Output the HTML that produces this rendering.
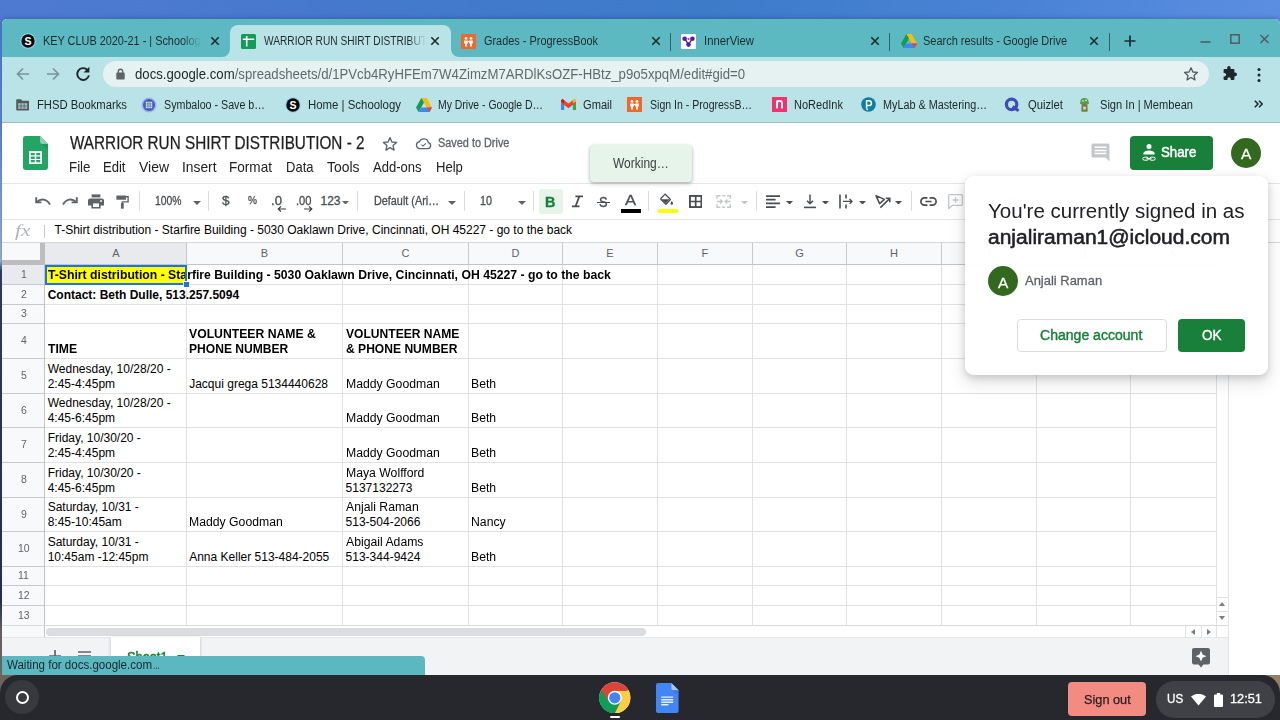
<!DOCTYPE html>
<html>
<head>
<meta charset="utf-8">
<title>WARRIOR RUN SHIRT DISTRIBUTION - 2 - Google Sheets</title>
<style>
*{box-sizing:border-box;margin:0;padding:0}
html,body{width:1280px;height:720px;overflow:hidden}
body{font-family:"Liberation Sans",sans-serif;position:relative;background:#4f7fd7;color:#202124}
.a{position:absolute;display:block}
.t{position:absolute;white-space:pre;transform-origin:left center;display:block}
</style>
</head>
<body>
<!-- chrome_ui -->
<div class="a" style="left:0px;top:0px;width:1280px;height:720px;background:linear-gradient(90deg,#4f7ad2 0%,#4679cd 25%,#3d7bc9 55%,#4a83d6 80%,#5b8ee1 100%);"></div>
<div class="a" style="left:0px;top:19px;width:3px;height:700px;background:linear-gradient(180deg,#4f7ad2 0%,#5a86d8 15%,#8fb0df 33%,#9ab4d8 34.5%,#2c3f60 36%,#22324e 83%,#6e675f 87.5%,#7a7168 100%);"></div>
<div class="a" style="left:2px;top:19px;width:1278px;height:656px;background:#fff;border-radius:5px 5px 0 0;box-shadow:0 -1px 4px rgba(20,30,80,.28)"></div>
<div class="a" style="left:2px;top:19px;width:1278px;height:38px;background:#5cb9c2;border-radius:5px 5px 0 0"></div>
<div class="a" style="left:230px;top:25px;width:221px;height:32px;background:#b9e3e7;border-radius:8px 8px 0 0"></div>
<svg class="a" style="left:222px;top:49px;" width="8" height="8" viewBox="0 0 8 8"><path d="M8 0V8H0A8 8 0 0 0 8 0Z" fill="#b9e3e7"/></svg>
<svg class="a" style="left:451px;top:49px;" width="8" height="8" viewBox="0 0 8 8"><path d="M0 0V8H8A8 8 0 0 1 0 0Z" fill="#b9e3e7"/></svg>
<svg class="a" style="left:20px;top:33px;" width="16" height="16" viewBox="0 0 16 16"><circle cx="8" cy="8" r="7.8" fill="#8fd4f2"/><circle cx="8" cy="8" r="6.7" fill="#0b0b0b"/><text x="8" y="11.7" font-family="Liberation Sans" font-weight="bold" font-size="10.5" fill="#fff" text-anchor="middle">S</text></svg>
<span class="t" style="left:43.0px;top:35.3px;font-size:12px;line-height:12px;color:#1f2a2c;transform:scaleX(0.9072);width:174.2px;overflow:hidden;-webkit-mask-image:linear-gradient(90deg,#000 154.3px,transparent 174.2px);">KEY CLUB 2020-21 - | Schoology</span>
<svg class="a" style="left:210px;top:36px;" width="10" height="10" viewBox="0 0 10 10"><path d="M1.2999999999999998 1.2999999999999998L8.7 8.7M8.7 1.2999999999999998L1.2999999999999998 8.7" stroke="#1f2a2c" stroke-width="1.6" fill="none"/></svg>
<svg class="a" style="left:241px;top:34px;" width="15" height="15" viewBox="0 0 15 15"><rect width="15" height="15" rx="1.5" fill="#0f9d58"/><path d="M1.8 5.2H13.2M5.7 2V12.6" stroke="#fff" stroke-width="1.6" fill="none"/></svg>
<span class="t" style="left:264.0px;top:35.3px;font-size:12px;line-height:12px;color:#1f2a2c;transform:scaleX(0.8466);width:191.4px;overflow:hidden;-webkit-mask-image:linear-gradient(90deg,#000 170.1px,transparent 191.4px);">WARRIOR RUN SHIRT DISTRIBUTION</span>
<svg class="a" style="left:430px;top:36px;" width="10" height="10" viewBox="0 0 10 10"><path d="M1.2999999999999998 1.2999999999999998L8.7 8.7M8.7 1.2999999999999998L1.2999999999999998 8.7" stroke="#1f2a2c" stroke-width="1.6" fill="none"/></svg>
<svg class="a" style="left:461px;top:34px;" width="15" height="15" viewBox="0 0 15 15"><rect width="15" height="15" fill="#f2682a"/><circle cx="5" cy="4.4" r="1.4" fill="#fff"/><circle cx="10" cy="4.4" r="1.4" fill="#fff"/><path d="M3.2 6.4H6.8V9.5H6V12.5H4V9.5H3.2ZM8.2 6.4H11.8V9.5H11V12.5H9V9.5H8.2Z" fill="#fff"/><path d="M6.8 7.5H8.2" stroke="#fff" stroke-width="1"/></svg>
<span class="t" style="left:484.0px;top:35.3px;font-size:12px;line-height:12px;color:#1f2a2c;transform:scaleX(0.9092);">Grades - ProgressBook</span>
<svg class="a" style="left:651px;top:36px;" width="10" height="10" viewBox="0 0 10 10"><path d="M1.2999999999999998 1.2999999999999998L8.7 8.7M8.7 1.2999999999999998L1.2999999999999998 8.7" stroke="#1f2a2c" stroke-width="1.6" fill="none"/></svg>
<div class="a" style="left:670px;top:33px;width:1px;height:18px;background:#2f6269;"></div>
<svg class="a" style="left:681px;top:34px;" width="15" height="15" viewBox="0 0 15 15"><rect width="15" height="15" rx="1" fill="#fff"/><path d="M4 5.2L7.5 10.5L11 5.2" stroke="#4a148c" stroke-width="1.3" fill="none"/><circle cx="3.6" cy="4.8" r="2.3" fill="#5e1b9e"/><circle cx="11.4" cy="4.8" r="2.3" fill="#5e1b9e"/><circle cx="7.5" cy="10.6" r="2.3" fill="#5e1b9e"/><circle cx="7.5" cy="5" r="1.1" fill="#e91e8c"/></svg>
<span class="t" style="left:704.0px;top:35.3px;font-size:12px;line-height:12px;color:#1f2a2c;transform:scaleX(0.9406);">InnerView</span>
<svg class="a" style="left:870px;top:36px;" width="10" height="10" viewBox="0 0 10 10"><path d="M1.2999999999999998 1.2999999999999998L8.7 8.7M8.7 1.2999999999999998L1.2999999999999998 8.7" stroke="#1f2a2c" stroke-width="1.6" fill="none"/></svg>
<div class="a" style="left:889px;top:33px;width:1px;height:18px;background:#2f6269;"></div>
<svg class="a" style="left:901px;top:34px;" width="16" height="14" viewBox="0 0 16 14"><path d="M5.4 0H10.6L16 9.4H10.8Z" fill="#fbbc04"/><path d="M5.4 0L8 4.6L2.6 14L0 9.4Z" fill="#0f9d58"/><path d="M5.3 9.4H16L13.4 14H2.6Z" fill="#4285f4"/><path d="M10.8 9.4H16L13.4 14Z" fill="#ea4335"/></svg>
<span class="t" style="left:923.0px;top:35.3px;font-size:12px;line-height:12px;color:#1f2a2c;transform:scaleX(0.9148);">Search results - Google Drive</span>
<svg class="a" style="left:1089px;top:36px;" width="10" height="10" viewBox="0 0 10 10"><path d="M1.2999999999999998 1.2999999999999998L8.7 8.7M8.7 1.2999999999999998L1.2999999999999998 8.7" stroke="#1f2a2c" stroke-width="1.6" fill="none"/></svg>
<div class="a" style="left:1109px;top:33px;width:1px;height:18px;background:#2f6269;"></div>
<svg class="a" style="left:1124px;top:35px;" width="12" height="12" viewBox="0 0 12 12"><path d="M6 0.5V11.5M0.5 6H11.5" stroke="#1f2a2c" stroke-width="1.7"/></svg>
<svg class="a" style="left:1200px;top:31px;" width="72" height="16" viewBox="0 0 72 16"><path d="M0.5 11H10.5" stroke="#505d60" stroke-width="1.6"/><rect x="30.8" y="3.8" width="8.4" height="8.4" fill="none" stroke="#505d60" stroke-width="1.5"/><path d="M60.5 4L68.5 12M68.5 4L60.5 12" stroke="#505d60" stroke-width="1.5"/></svg>
<div class="a" style="left:2px;top:57px;width:1278px;height:65px;background:#b9e3e7;"></div>
<div class="a" style="left:2px;top:122px;width:1278px;height:1px;background:#a3b9bc;"></div>
<svg class="a" style="left:16px;top:67px;" width="14" height="14" viewBox="0 0 14 14"><path d="M13 7H2M7 1.5L1.5 7L7 12.5" stroke="#7b9498" stroke-width="1.7" fill="none"/></svg>
<svg class="a" style="left:46px;top:67px;" width="14" height="14" viewBox="0 0 14 14"><path d="M1 7H12M7 1.5L12.5 7L7 12.5" stroke="#7b9498" stroke-width="1.7" fill="none"/></svg>
<svg class="a" style="left:75px;top:66px;" width="16" height="16" viewBox="0 0 16 16"><path d="M12.4 3.9A5.9 5.9 0 1 0 13.9 9.4" stroke="#1d2628" stroke-width="1.9" fill="none"/><path d="M8.6 6.6H14.4V0.8Z" fill="#1d2628"/></svg>
<div class="a" style="left:103px;top:61px;width:1106px;height:26px;background:#e6f2f2;border-radius:13px"></div>
<svg class="a" style="left:115.5px;top:68px;" width="9" height="12" viewBox="0 0 9 12"><rect x="0.3" y="4.6" width="8.4" height="6.8" rx="0.9" fill="#5f6466"/><path d="M2.3 5V3.4A2.2 2.2 0 0 1 6.7 3.4V5" stroke="#5f6466" stroke-width="1.4" fill="none"/></svg>
<span class="t" style="left:135.0px;top:67.1px;font-size:14px;line-height:14px;color:#5f6a6c;transform:scaleX(0.9417);"><b style="font-weight:400;color:#1d2628">docs.google.com</b>/spreadsheets/d/1PVcb4RyHFEm7W4ZimzM7ARDlKsOZF-HBtz_p9o5xpqM/edit#gid=0</span>
<svg class="a" style="left:1183px;top:66px;" width="16" height="16" viewBox="0 0 16 16"><path d="M8 1.8L9.9 6L14.4 6.4L11 9.4L12 13.9L8 11.5L4 13.9L5 9.4L1.6 6.4L6.1 6Z" stroke="#505d60" stroke-width="1.3" fill="none" stroke-linejoin="round"/></svg>
<svg class="a" style="left:1221px;top:66px;" width="16" height="16" viewBox="0 0 16 16"><path d="M6.2 1.8A1.7 1.7 0 0 1 9.6 1.8V3H12.4A1 1 0 0 1 13.4 4V6.6H14.2A1.8 1.8 0 0 1 14.2 10.2H13.4V13A1 1 0 0 1 12.4 14H9.8V13A1.7 1.7 0 0 0 6.4 13V14H3.6A1 1 0 0 1 2.6 13V10.4H3.4A1.7 1.7 0 0 0 3.4 7H2.6V4A1 1 0 0 1 3.6 3H6.2Z" fill="#1d2628"/></svg>
<svg class="a" style="left:1256px;top:67px;" width="6" height="16" viewBox="0 0 6 16"><circle cx="3" cy="2.4" r="1.5" fill="#1d2628"/><circle cx="3" cy="8" r="1.5" fill="#1d2628"/><circle cx="3" cy="13.6" r="1.5" fill="#1d2628"/></svg>
<svg class="a" style="left:16px;top:99px;" width="13.4" height="12" viewBox="0 0 13.4 12"><path d="M1.2 0.2H5L6.4 1.8H12.2A1 1 0 0 1 13.2 2.8V10.6A1 1 0 0 1 12.2 11.6H1.2A1 1 0 0 1 0.2 10.6V1.2A1 1 0 0 1 1.2 0.2Z" fill="#56595b"/><path d="M2.2 4.4H11.2V9.6H2.2Z" fill="#b9e3e7"/><path d="M2.2 6.2H11.2M2.2 7.9H11.2M5 4.4V9.6M8.2 4.4V9.6" stroke="#56595b" stroke-width="0.8"/></svg>
<span class="t" style="left:37.0px;top:98.8px;font-size:12px;line-height:12px;color:#1d2628;transform:scaleX(0.9372);">FHSD Bookmarks</span>
<svg class="a" style="left:141px;top:97px;" width="16" height="16" viewBox="0 0 16 16"><circle cx="8" cy="8" r="7.6" fill="#9db4e6"/><circle cx="8" cy="8" r="6" fill="#3f5fb5"/><path d="M4.8 4.8H11.2V11.2H4.8Z" fill="#e8eefc"/><path d="M6.9 4.8V11.2M9.1 4.8V11.2M4.8 6.9H11.2M4.8 9.1H11.2" stroke="#3f5fb5" stroke-width="0.7"/></svg>
<span class="t" style="left:164.0px;top:98.8px;font-size:12px;line-height:12px;color:#1d2628;transform:scaleX(0.8907);">Symbaloo - Save b…</span>
<svg class="a" style="left:285px;top:97px;" width="16" height="16" viewBox="0 0 16 16"><circle cx="8" cy="8" r="7.8" fill="#8fd4f2"/><circle cx="8" cy="8" r="6.7" fill="#0b0b0b"/><text x="8" y="11.7" font-family="Liberation Sans" font-weight="bold" font-size="10.5" fill="#fff" text-anchor="middle">S</text></svg>
<span class="t" style="left:308.0px;top:98.8px;font-size:12px;line-height:12px;color:#1d2628;transform:scaleX(0.9505);">Home | Schoology</span>
<svg class="a" style="left:416px;top:98px;" width="16" height="14" viewBox="0 0 16 14"><path d="M5.4 0H10.6L16 9.4H10.8Z" fill="#fbbc04"/><path d="M5.4 0L8 4.6L2.6 14L0 9.4Z" fill="#0f9d58"/><path d="M5.3 9.4H16L13.4 14H2.6Z" fill="#4285f4"/><path d="M10.8 9.4H16L13.4 14Z" fill="#ea4335"/></svg>
<span class="t" style="left:438.0px;top:98.8px;font-size:12px;line-height:12px;color:#1d2628;transform:scaleX(0.8699);">My Drive - Google D…</span>
<svg class="a" style="left:561px;top:99px;" width="15" height="11" viewBox="0 0 15 11"><path d="M0 1.2V11H3.2V4.6Z" fill="#4285f4"/><path d="M15 1.2V11H11.8V4.6Z" fill="#34a853"/><path d="M0 1.2L1.6 0L7.5 4.6L13.4 0L15 1.2V3.6L7.5 9.2L0 3.6Z" fill="#ea4335"/><path d="M0 1.2L1.6 0L3.2 1.3V4.6L0 2.4Z" fill="#c5221f"/><path d="M15 1.2L13.4 0L11.8 1.3V4.6L15 2.4Z" fill="#fbbc04"/></svg>
<span class="t" style="left:583.0px;top:98.8px;font-size:12px;line-height:12px;color:#1d2628;transform:scaleX(0.9252);">Gmail</span>
<svg class="a" style="left:627px;top:97px;" width="15" height="15" viewBox="0 0 15 15"><rect width="15" height="15" fill="#f2682a"/><circle cx="5" cy="4.4" r="1.4" fill="#fff"/><circle cx="10" cy="4.4" r="1.4" fill="#fff"/><path d="M3.2 6.4H6.8V9.5H6V12.5H4V9.5H3.2ZM8.2 6.4H11.8V9.5H11V12.5H9V9.5H8.2Z" fill="#fff"/><path d="M6.8 7.5H8.2" stroke="#fff" stroke-width="1"/></svg>
<span class="t" style="left:650.0px;top:98.8px;font-size:12px;line-height:12px;color:#1d2628;transform:scaleX(0.8790);">Sign In - ProgressB…</span>
<svg class="a" style="left:772px;top:97px;" width="15" height="15" viewBox="0 0 15 15"><rect width="15" height="15" fill="#f0336e"/><path d="M5 11.5V6.4A2.5 2.5 0 0 1 10 6.4V11.5" stroke="#fff" stroke-width="1.9" fill="none"/><path d="M5 3.6V7" stroke="#fff" stroke-width="1.9"/></svg>
<span class="t" style="left:794.0px;top:98.8px;font-size:12px;line-height:12px;color:#1d2628;transform:scaleX(0.9180);">NoRedInk</span>
<svg class="a" style="left:861px;top:97px;" width="15" height="15" viewBox="0 0 15 15"><circle cx="7.5" cy="7.5" r="7.3" fill="#0d7fa5"/><path d="M5.6 11.6V3.8H8A2.4 2.4 0 0 1 8 8.6H5.8" stroke="#fff" stroke-width="1.5" fill="none"/><circle cx="6.2" cy="12.4" r="0.8" fill="#fff"/></svg>
<span class="t" style="left:883.0px;top:98.8px;font-size:12px;line-height:12px;color:#1d2628;transform:scaleX(0.9013);">MyLab &amp; Mastering…</span>
<svg class="a" style="left:1004px;top:97px;" width="17" height="16" viewBox="0 0 17 16"><circle cx="7.6" cy="7.4" r="5.2" fill="none" stroke="#3f4bb8" stroke-width="3.2"/><path d="M8.6 9.6L14.6 13.8" stroke="#3f4bb8" stroke-width="3"/></svg>
<span class="t" style="left:1028.0px;top:98.8px;font-size:12px;line-height:12px;color:#1d2628;transform:scaleX(0.9368);">Quizlet</span>
<svg class="a" style="left:1078px;top:97px;" width="13" height="16" viewBox="0 0 13 16"><path d="M6.5 1C3.6 1 2 3 2.6 5C1.4 5.6 2 7.4 3.6 7.2L3.2 14.4H9.8L9.4 7.2C11.2 7.4 11.6 5.4 10.4 4.8C10.8 2.8 9.2 1 6.5 1Z" fill="#5a9a4a"/><path d="M4.6 7.6H8.4L8.8 14.4H4.2Z" fill="#8a6a3a"/><circle cx="5" cy="3.8" r="0.9" fill="#d9ecc8"/><circle cx="8" cy="3.4" r="0.9" fill="#d9ecc8"/><path d="M5.2 9.6H7.8V12.6H5.2Z" fill="#e8dcb8"/></svg>
<span class="t" style="left:1100.0px;top:98.8px;font-size:12px;line-height:12px;color:#1d2628;transform:scaleX(0.9252);">Sign In | Membean</span>
<svg class="a" style="left:1254px;top:100px;" width="9" height="8" viewBox="0 0 9 8"><path d="M0.8 0.8L4 4L0.8 7.2M5 0.8L8.2 4L5 7.2" stroke="#1d2628" stroke-width="1.5" fill="none"/></svg>
<!-- sheets_ui -->
<svg class="a" style="left:23px;top:136px;" width="25" height="34" viewBox="0 0 25 34"><path d="M2.4 0H17L25 8V31.6A2.4 2.4 0 0 1 22.6 34H2.4A2.4 2.4 0 0 1 0 31.6V2.4A2.4 2.4 0 0 1 2.4 0Z" fill="#23a566"/><path d="M17 0L25 8H19.4A2.4 2.4 0 0 1 17 5.6Z" fill="#8ed1b1"/><path d="M17.6 8H25V13Z" fill="#1c8f56" opacity="0.55"/><path d="M6 15.2H19V28H6Z" fill="#fff"/><path d="M7.8 17H11.7V19.3H7.8ZM13.3 17H17.2V19.3H13.3ZM7.8 20.6H11.7V22.9H7.8ZM13.3 20.6H17.2V22.9H13.3ZM7.8 24.1H11.7V26.3H7.8ZM13.3 24.1H17.2V26.3H13.3Z" fill="#23a566"/></svg>
<span class="t" style="left:69.5px;top:133.6px;font-size:18.2px;line-height:18.2px;color:#1f1f1f;transform:scaleX(0.8407);-webkit-text-stroke:0.25px #1f1f1f;">WARRIOR RUN SHIRT DISTRIBUTION - 2</span>
<svg class="a" style="left:382px;top:136px;" width="16" height="16" viewBox="0 0 16 16"><path d="M8 1.6L9.9 6L14.6 6.4L11 9.5L12.1 14.1L8 11.6L3.9 14.1L5 9.5L1.4 6.4L6.1 6Z" stroke="#5f6368" stroke-width="1.3" fill="none" stroke-linejoin="round"/></svg>
<svg class="a" style="left:415px;top:137px;" width="17" height="13" viewBox="0 0 17 13"><path d="M4.4 11.6H12.8A3 3 0 0 0 13.4 5.7A4.7 4.7 0 0 0 4.5 4.6A3.55 3.55 0 0 0 4.4 11.6Z" stroke="#5f6368" stroke-width="1.3" fill="none"/><path d="M6.4 7.6L8 9.1L10.8 6.3" stroke="#5f6368" stroke-width="1.1" fill="none"/></svg>
<span class="t" style="left:438.0px;top:137.1px;font-size:12px;line-height:12px;color:#5f6368;transform:scaleX(0.9072);-webkit-text-stroke:0.3px #5f6368;">Saved to Drive</span>
<span class="t" style="left:69.0px;top:160.4px;font-size:14.3px;line-height:14.3px;color:#202124;transform:scaleX(0.9329);">File</span>
<span class="t" style="left:103.0px;top:160.4px;font-size:14.3px;line-height:14.3px;color:#202124;transform:scaleX(0.9131);">Edit</span>
<span class="t" style="left:138.5px;top:160.4px;font-size:14.3px;line-height:14.3px;color:#202124;transform:scaleX(0.9761);">View</span>
<span class="t" style="left:181.5px;top:160.4px;font-size:14.3px;line-height:14.3px;color:#202124;transform:scaleX(0.9646);">Insert</span>
<span class="t" style="left:229.0px;top:160.4px;font-size:14.3px;line-height:14.3px;color:#202124;transform:scaleX(0.9496);">Format</span>
<span class="t" style="left:285.5px;top:160.4px;font-size:14.3px;line-height:14.3px;color:#202124;transform:scaleX(0.9105);">Data</span>
<span class="t" style="left:326.5px;top:160.4px;font-size:14.3px;line-height:14.3px;color:#202124;transform:scaleX(0.9733);">Tools</span>
<span class="t" style="left:373.0px;top:160.4px;font-size:14.3px;line-height:14.3px;color:#202124;transform:scaleX(0.9124);">Add-ons</span>
<span class="t" style="left:435.6px;top:160.4px;font-size:14.3px;line-height:14.3px;color:#202124;transform:scaleX(0.9148);">Help</span>
<svg class="a" style="left:1091px;top:143px;" width="20" height="19" viewBox="0 0 20 19"><path d="M2 0.5H17A1.5 1.5 0 0 1 18.5 2V18.5L14.6 14.6H2A1.5 1.5 0 0 1 0.5 13.1V2A1.5 1.5 0 0 1 2 0.5Z" fill="#c4c7ca"/><path d="M3.6 4.2H15.4M3.6 7.4H15.4M3.6 10.6H15.4" stroke="#fff" stroke-width="1.5"/></svg>
<div class="a" style="left:1130px;top:136px;width:82.5px;height:33.5px;background:#188038;border-radius:4px"></div>
<svg class="a" style="left:1141.5px;top:143.5px;" width="14" height="17.5" viewBox="0 0 14 17.5"><circle cx="7" cy="2.6" r="2.5" fill="#fff"/><path d="M1.4 10.6V9.4C1.4 7.4 4.6 6.4 7 6.4S12.6 7.4 12.6 9.4V10.6Z" fill="#fff"/><rect x="0.8" y="13.2" width="5.6" height="3" rx="1.5" fill="none" stroke="#fff" stroke-width="1"/><rect x="7.6" y="13.2" width="5.6" height="3" rx="1.5" fill="none" stroke="#fff" stroke-width="1"/><path d="M4.4 14.7H9.6" stroke="#fff" stroke-width="1"/></svg>
<span class="t" style="left:1161.0px;top:145.1px;font-size:14px;line-height:14px;color:#fff;transform:scaleX(0.9476);-webkit-text-stroke:0.45px #fff;">Share</span>
<div class="a" style="left:1231.25px;top:137.5px;width:30px;height:30px;background:#33691e;border-radius:50%"></div>
<span class="t" style="left:1241.2px;top:146.3px;font-size:15px;line-height:15px;color:#fff;transform:scaleX(1.0284);-webkit-text-stroke:0.3px #fff;">A</span>
<div class="a" style="left:2px;top:183px;width:1278px;height:1px;background:#e3e5e8;"></div>
<div class="a" style="left:2px;top:219px;width:1278px;height:1px;background:#e3e5e8;"></div>
<div class="a" style="left:2px;top:242px;width:1278px;height:1px;background:#d5d7da;"></div>
<svg class="a" style="left:35px;top:194px;" width="17" height="14" viewBox="0 0 17 14"><path d="M1.2 3.2V8.4H6.4" stroke="#5f6368" stroke-width="1.9" fill="none"/><path d="M2 8C5.6 4.4 11.6 4.4 15 10.6" stroke="#5f6368" stroke-width="1.9" fill="none"/></svg>
<svg class="a" style="left:61px;top:194px;" width="17" height="14" viewBox="0 0 17 14"><path d="M15.8 3.2V8.4H10.6" stroke="#5f6368" stroke-width="1.9" fill="none"/><path d="M15 8C11.4 4.4 5.4 4.4 2 10.6" stroke="#5f6368" stroke-width="1.9" fill="none"/></svg>
<svg class="a" style="left:88px;top:194px;" width="16" height="15" viewBox="0 0 16 15"><path d="M3.6 0.4H12.4V3.4H3.6Z" fill="#5f6368"/><path d="M2.2 4.4H13.8A2.2 2.2 0 0 1 16 6.6V11.4H12.6V14.6H3.4V11.4H0V6.6A2.2 2.2 0 0 1 2.2 4.4Z" fill="#5f6368"/><path d="M5 9.4H11V13H5Z" fill="#fff"/><circle cx="13" cy="7" r="0.9" fill="#fff"/></svg>
<svg class="a" style="left:116px;top:194.6px;" width="13.2" height="14" viewBox="0 0 15 16"><path d="M0.4 0.6H11.4V5.4H0.4Z" fill="#5f6368"/><path d="M11.4 2H13.8V7.8H7.2V10" stroke="#5f6368" stroke-width="1.6" fill="none"/><path d="M5.6 9.2H8.8V15.6H5.6Z" fill="#5f6368"/></svg>
<div class="a" style="left:139px;top:191.3px;width:1px;height:19.4px;background:#dadce0;"></div>
<span class="t" style="left:154.5px;top:194.8px;font-size:12px;line-height:12px;color:#4a4e52;transform:scaleX(0.8631);-webkit-text-stroke:0.3px #4a4e52;">100%</span>
<svg class="a" style="left:192.5px;top:200.5px;" width="8" height="4" viewBox="0 0 8 4"><path d="M0 0H8L4.0 4Z" fill="#5f6368"/></svg>
<div class="a" style="left:208px;top:191.3px;width:1px;height:19.4px;background:#dadce0;"></div>
<span class="t" style="left:222.0px;top:194.9px;font-size:12.5px;line-height:12.5px;color:#4a4e52;transform:scaleX(1.0787);-webkit-text-stroke:0.3px #4a4e52;">$</span>
<span class="t" style="left:247.5px;top:195.3px;font-size:11.5px;line-height:11.5px;color:#4a4e52;transform:scaleX(0.8794);-webkit-text-stroke:0.3px #4a4e52;">%</span>
<span class="t" style="left:270.5px;top:194.8px;font-size:12px;line-height:12px;color:#4a4e52;transform:scaleX(1.0983);-webkit-text-stroke:0.3px #4a4e52;">.0</span>
<svg class="a" style="left:277px;top:206px;" width="9" height="6" viewBox="0 0 9 6"><path d="M9 3H1.4M4 0.4L1.2 3L4 5.6" stroke="#3c4043" stroke-width="1.2" fill="none"/></svg>
<span class="t" style="left:295.5px;top:194.8px;font-size:12px;line-height:12px;color:#4a4e52;transform:scaleX(0.9288);-webkit-text-stroke:0.3px #4a4e52;">.00</span>
<svg class="a" style="left:304px;top:206px;" width="9" height="6" viewBox="0 0 9 6"><path d="M0 3H7.6M5 0.4L7.8 3L5 5.6" stroke="#3c4043" stroke-width="1.2" fill="none"/></svg>
<span class="t" style="left:320.5px;top:194.8px;font-size:12px;line-height:12px;color:#4a4e52;-webkit-text-stroke:0.3px #4a4e52;">123</span>
<svg class="a" style="left:341.5px;top:200.7px;" width="7" height="3.6" viewBox="0 0 7 3.6"><path d="M0 0H7L3.5 3.6Z" fill="#5f6368"/></svg>
<div class="a" style="left:357px;top:191.3px;width:1px;height:19.4px;background:#dadce0;"></div>
<span class="t" style="left:373.5px;top:194.8px;font-size:12px;line-height:12px;color:#4a4e52;transform:scaleX(0.9024);-webkit-text-stroke:0.3px #4a4e52;">Default (Ari…</span>
<svg class="a" style="left:447.5px;top:200.5px;" width="8" height="4" viewBox="0 0 8 4"><path d="M0 0H8L4.0 4Z" fill="#5f6368"/></svg>
<div class="a" style="left:464px;top:191.3px;width:1px;height:19.4px;background:#dadce0;"></div>
<span class="t" style="left:479.5px;top:194.8px;font-size:12px;line-height:12px;color:#4a4e52;transform:scaleX(0.8982);-webkit-text-stroke:0.3px #4a4e52;">10</span>
<svg class="a" style="left:517.5px;top:200.5px;" width="8" height="4" viewBox="0 0 8 4"><path d="M0 0H8L4.0 4Z" fill="#5f6368"/></svg>
<div class="a" style="left:533px;top:191.3px;width:1px;height:19.4px;background:#dadce0;"></div>
<div class="a" style="left:538.5px;top:189.2px;width:24.5px;height:24.6px;background:#e6f4ea;border-radius:3px"></div>
<span class="t" style="left:545.4px;top:194.1px;font-size:15.5px;line-height:15.5px;color:#188038;font-weight:700;transform:scaleX(0.9283);-webkit-text-stroke:0.35px #188038;">B</span>
<svg class="a" style="left:571px;top:195px;" width="13" height="13" viewBox="0 0 13 13"><path d="M4.4 1.4H12M0.9 11.4H8.5M8.4 1.4L4.5 11.4" stroke="#4a4e52" stroke-width="1.7" fill="none"/></svg>
<span class="t" style="left:599.2px;top:194.2px;font-size:15.5px;line-height:15.5px;color:#4a4e52;transform:scaleX(0.8314);-webkit-text-stroke:0.35px #4a4e52;">S</span>
<div class="a" style="left:597px;top:201.7px;width:13.2px;height:1.4px;background:#4a4e52;"></div>
<span class="t" style="left:625.4px;top:192.8px;font-size:14px;line-height:14px;color:#4a4e52;transform:scaleX(1.1880);-webkit-text-stroke:0.3px #4a4e52;">A</span>
<div class="a" style="left:621px;top:209.1px;width:20px;height:3.6px;background:#000;"></div>
<div class="a" style="left:648px;top:191.3px;width:1px;height:19.4px;background:#dadce0;"></div>
<svg class="a" style="left:660.4px;top:193.2px;" width="13.6" height="12.75" viewBox="0 0 16 15"><path d="M5.6 0.8L11.8 7A1 1 0 0 1 11.8 8.4L7.6 12.6A1 1 0 0 1 6.2 12.6L1.2 7.6A1 1 0 0 1 1.2 6.2L6.4 1" stroke="#4a4e52" stroke-width="1.5" fill="none"/><path d="M1.4 7.4H11.6L6.9 12.2Z" fill="#4a4e52"/><path d="M13.8 9.4C14.8 10.8 15.4 11.6 15.4 12.3A1.5 1.5 0 0 1 12.4 12.3C12.4 11.6 12.9 10.8 13.8 9.4Z" fill="#4a4e52"/></svg>
<div class="a" style="left:657.8px;top:209.1px;width:20px;height:3.6px;background:#ffff00;"></div>
<svg class="a" style="left:688.5px;top:195px;" width="13.4" height="13" viewBox="0 0 13.4 13"><rect x="0.95" y="0.95" width="11.5" height="11.1" fill="none" stroke="#4a4e52" stroke-width="1.9"/><path d="M6.7 1V12M1 6.5H12.4" stroke="#4a4e52" stroke-width="1.7"/></svg>
<svg class="a" style="left:715.8px;top:195px;" width="15.4" height="13" viewBox="0 0 16 14"><path d="M0.8 4V0.8H4.4M6.4 0.8H9.6M11.6 0.8H15.2V4M0.8 10V13.2H4.4M6.4 13.2H9.6M11.6 13.2H15.2V10" stroke="#c4c7ca" stroke-width="1.5" fill="none"/><path d="M0.6 7H6.4M4.2 4.8L6.4 7L4.2 9.2M15.4 7H9.6M11.8 4.8L9.6 7L11.8 9.2" stroke="#c4c7ca" stroke-width="1.4" fill="none"/></svg>
<svg class="a" style="left:740.5px;top:200.7px;" width="7" height="3.6" viewBox="0 0 7 3.6"><path d="M0 0H7L3.5 3.6Z" fill="#c4c7ca"/></svg>
<div class="a" style="left:756.2px;top:191.3px;width:1px;height:19.4px;background:#dadce0;"></div>
<svg class="a" style="left:766px;top:195px;" width="14" height="13" viewBox="0 0 14 13"><path d="M0 1H14M0 4.7H9.6M0 8.4H14M0 12H9.6" stroke="#4a4e52" stroke-width="1.75"/></svg>
<svg class="a" style="left:785.5px;top:200.7px;" width="7" height="3.6" viewBox="0 0 7 3.6"><path d="M0 0H7L3.5 3.6Z" fill="#4a4e52"/></svg>
<svg class="a" style="left:804px;top:194px;" width="12" height="15" viewBox="0 0 12 15"><path d="M6 0.6V9.4M3 6.8L6 9.8L9 6.8" stroke="#4a4e52" stroke-width="1.5" fill="none"/><path d="M0 13.4H12" stroke="#4a4e52" stroke-width="1.6"/></svg>
<svg class="a" style="left:822.0px;top:200.7px;" width="7" height="3.6" viewBox="0 0 7 3.6"><path d="M0 0H7L3.5 3.6Z" fill="#4a4e52"/></svg>
<svg class="a" style="left:839px;top:194px;" width="14" height="15" viewBox="0 0 14 15"><path d="M1 0.4V14.6" stroke="#4a4e52" stroke-width="1.6"/><path d="M7 0.4V4.4M7 10.4V14.6" stroke="#4a4e52" stroke-width="1.6"/><path d="M4 7.4H13M10.6 5L13 7.4L10.6 9.8" stroke="#4a4e52" stroke-width="1.4" fill="none"/></svg>
<svg class="a" style="left:858.5px;top:200.7px;" width="7" height="3.6" viewBox="0 0 7 3.6"><path d="M0 0H7L3.5 3.6Z" fill="#4a4e52"/></svg>
<svg class="a" style="left:875px;top:194px;" width="16" height="15" viewBox="0 0 16 15"><path d="M1 1.6L9.4 5.4L4.6 9.6Z" stroke="#4a4e52" stroke-width="1.5" fill="none" stroke-linejoin="round"/><path d="M5.4 13.6L14.6 4.6M10.8 4.2H14.8V8.2" stroke="#4a4e52" stroke-width="1.5" fill="none"/></svg>
<svg class="a" style="left:895.0px;top:200.7px;" width="7" height="3.6" viewBox="0 0 7 3.6"><path d="M0 0H7L3.5 3.6Z" fill="#4a4e52"/></svg>
<div class="a" style="left:911px;top:191.3px;width:1px;height:19.4px;background:#dadce0;"></div>
<svg class="a" style="left:920px;top:196.5px;" width="17" height="9" viewBox="0 0 17 9"><path d="M7.4 0.9H4.5A3.6 3.6 0 0 0 4.5 8.1H7.4M9.6 0.9H12.5A3.6 3.6 0 0 1 12.5 8.1H9.6M5.4 4.5H11.6" stroke="#4a4e52" stroke-width="1.7" fill="none"/></svg>
<svg class="a" style="left:947.5px;top:194px;" width="15" height="15" viewBox="0 0 15 15"><path d="M1.6 0.7H13.4A0.9 0.9 0 0 1 14.3 1.6V10.4A0.9 0.9 0 0 1 13.4 11.3H4.4L0.7 14.6V1.6A0.9 0.9 0 0 1 1.6 0.7Z" stroke="#c4c7ca" stroke-width="1.3" fill="none"/><path d="M7.5 3.2V8.8M4.7 6H10.3" stroke="#c4c7ca" stroke-width="1.3"/></svg>
<svg class="a" style="left:975px;top:194px;" width="14" height="14" viewBox="0 0 14 14"><rect x="0.7" y="0.7" width="12.6" height="12.6" fill="none" stroke="#d0d3d6" stroke-width="1.3"/><path d="M4 10.5V6.5M7 10.5V3.5M10 10.5V8" stroke="#d0d3d6" stroke-width="1.5"/></svg>
<svg class="a" style="left:1003px;top:195px;" width="14" height="12" viewBox="0 0 14 12"><path d="M0.5 0.7H13.5L8.4 6.6V11.4L5.6 9.8V6.6Z" fill="#d0d3d6"/></svg>
<svg class="a" style="left:1021.5px;top:200.7px;" width="7" height="3.6" viewBox="0 0 7 3.6"><path d="M0 0H7L3.5 3.6Z" fill="#d0d3d6"/></svg>
<div class="a" style="left:1036px;top:191.3px;width:1px;height:19.4px;background:#dadce0;"></div>
<span class="t" style="left:1047.0px;top:194.3px;font-size:15px;line-height:15px;color:#d0d3d6;">Σ</span>
<svg class="a" style="left:1064.5px;top:200.7px;" width="7" height="3.6" viewBox="0 0 7 3.6"><path d="M0 0H7L3.5 3.6Z" fill="#d0d3d6"/></svg>
<svg class="a" style="left:1237px;top:198px;" width="12" height="8" viewBox="0 0 12 8"><path d="M1 7L6 2L11 7" stroke="#8a8d91" stroke-width="1.7" fill="none"/></svg>
<span class="t" style="left:14.5px;top:221.6px;font-size:17px;line-height:17px;color:#b0b3b7;font-style:italic;font-family:'Liberation Serif',serif;transform:scaleX(1.2621);">fx</span>
<div class="a" style="left:44px;top:225px;width:1px;height:13px;background:#c8cacd;"></div>
<span class="t" style="left:54.5px;top:224.3px;font-size:12px;line-height:12px;color:#000;">T-Shirt distribution - Starfire Building - 5030 Oaklawn Drive, Cincinnati, OH 45227 - go to the back</span>
<!-- grid_ui -->
<div class="a" style="left:2px;top:243px;width:1214px;height:22px;background:#f8f9fa;"></div>
<div class="a" style="left:2px;top:243px;width:43px;height:394px;background:#f8f9fa;"></div>
<div class="a" style="left:45px;top:243px;width:141px;height:21px;background:#e8eaed;"></div>
<div class="a" style="left:2px;top:265px;width:42px;height:19px;background:#e8eaed;"></div>
<div class="a" style="left:186px;top:243px;width:1px;height:382px;background:#e1e1e1;"></div>
<div class="a" style="left:342px;top:243px;width:1px;height:382px;background:#e1e1e1;"></div>
<div class="a" style="left:468px;top:243px;width:1px;height:382px;background:#e1e1e1;"></div>
<div class="a" style="left:562px;top:243px;width:1px;height:382px;background:#e1e1e1;"></div>
<div class="a" style="left:657px;top:243px;width:1px;height:382px;background:#e1e1e1;"></div>
<div class="a" style="left:752px;top:243px;width:1px;height:382px;background:#e1e1e1;"></div>
<div class="a" style="left:846px;top:243px;width:1px;height:382px;background:#e1e1e1;"></div>
<div class="a" style="left:941px;top:243px;width:1px;height:382px;background:#e1e1e1;"></div>
<div class="a" style="left:1036px;top:243px;width:1px;height:382px;background:#e1e1e1;"></div>
<div class="a" style="left:1130px;top:243px;width:1px;height:382px;background:#e1e1e1;"></div>
<div class="a" style="left:1216px;top:243px;width:1px;height:382px;background:#e1e1e1;"></div>
<div class="a" style="left:186px;top:243px;width:1px;height:21px;background:#c9c9c9;"></div>
<div class="a" style="left:342px;top:243px;width:1px;height:21px;background:#c9c9c9;"></div>
<div class="a" style="left:468px;top:243px;width:1px;height:21px;background:#c9c9c9;"></div>
<div class="a" style="left:562px;top:243px;width:1px;height:21px;background:#c9c9c9;"></div>
<div class="a" style="left:657px;top:243px;width:1px;height:21px;background:#c9c9c9;"></div>
<div class="a" style="left:752px;top:243px;width:1px;height:21px;background:#c9c9c9;"></div>
<div class="a" style="left:846px;top:243px;width:1px;height:21px;background:#c9c9c9;"></div>
<div class="a" style="left:941px;top:243px;width:1px;height:21px;background:#c9c9c9;"></div>
<div class="a" style="left:1036px;top:243px;width:1px;height:21px;background:#c9c9c9;"></div>
<div class="a" style="left:1130px;top:243px;width:1px;height:21px;background:#c9c9c9;"></div>
<div class="a" style="left:1216px;top:243px;width:1px;height:21px;background:#c9c9c9;"></div>
<div class="a" style="left:2px;top:284px;width:1214px;height:1px;background:#e1e1e1;"></div>
<div class="a" style="left:2px;top:304px;width:1214px;height:1px;background:#e1e1e1;"></div>
<div class="a" style="left:2px;top:323px;width:1214px;height:1px;background:#e1e1e1;"></div>
<div class="a" style="left:2px;top:358px;width:1214px;height:1px;background:#e1e1e1;"></div>
<div class="a" style="left:2px;top:393px;width:1214px;height:1px;background:#e1e1e1;"></div>
<div class="a" style="left:2px;top:427px;width:1214px;height:1px;background:#e1e1e1;"></div>
<div class="a" style="left:2px;top:462px;width:1214px;height:1px;background:#e1e1e1;"></div>
<div class="a" style="left:2px;top:497px;width:1214px;height:1px;background:#e1e1e1;"></div>
<div class="a" style="left:2px;top:531px;width:1214px;height:1px;background:#e1e1e1;"></div>
<div class="a" style="left:2px;top:566px;width:1214px;height:1px;background:#e1e1e1;"></div>
<div class="a" style="left:2px;top:585px;width:1214px;height:1px;background:#e1e1e1;"></div>
<div class="a" style="left:2px;top:605px;width:1214px;height:1px;background:#e1e1e1;"></div>
<div class="a" style="left:2px;top:625px;width:1214px;height:1px;background:#e1e1e1;"></div>
<div class="a" style="left:2px;top:284px;width:42px;height:1px;background:#c9c9c9;"></div>
<div class="a" style="left:2px;top:304px;width:42px;height:1px;background:#c9c9c9;"></div>
<div class="a" style="left:2px;top:323px;width:42px;height:1px;background:#c9c9c9;"></div>
<div class="a" style="left:2px;top:358px;width:42px;height:1px;background:#c9c9c9;"></div>
<div class="a" style="left:2px;top:393px;width:42px;height:1px;background:#c9c9c9;"></div>
<div class="a" style="left:2px;top:427px;width:42px;height:1px;background:#c9c9c9;"></div>
<div class="a" style="left:2px;top:462px;width:42px;height:1px;background:#c9c9c9;"></div>
<div class="a" style="left:2px;top:497px;width:42px;height:1px;background:#c9c9c9;"></div>
<div class="a" style="left:2px;top:531px;width:42px;height:1px;background:#c9c9c9;"></div>
<div class="a" style="left:2px;top:566px;width:42px;height:1px;background:#c9c9c9;"></div>
<div class="a" style="left:2px;top:585px;width:42px;height:1px;background:#c9c9c9;"></div>
<div class="a" style="left:2px;top:605px;width:42px;height:1px;background:#c9c9c9;"></div>
<div class="a" style="left:2px;top:625px;width:42px;height:1px;background:#c9c9c9;"></div>
<div class="a" style="left:40px;top:243px;width:5px;height:22px;background:#bdbdbd;"></div>
<div class="a" style="left:2px;top:260px;width:43px;height:5px;background:#bdbdbd;"></div>
<div class="a" style="left:45px;top:264px;width:1171px;height:1px;background:#c4c4c4;"></div>
<div class="a" style="left:44px;top:265px;width:1px;height:372px;background:#c4c4c4;"></div>
<span class="t" style="left:112.3px;top:247.7px;font-size:11px;line-height:11px;color:#5f6368;">A</span>
<span class="t" style="left:260.8px;top:247.7px;font-size:11px;line-height:11px;color:#5f6368;">B</span>
<span class="t" style="left:401.5px;top:247.7px;font-size:11px;line-height:11px;color:#5f6368;">C</span>
<span class="t" style="left:511.5px;top:247.7px;font-size:11px;line-height:11px;color:#5f6368;">D</span>
<span class="t" style="left:606.3px;top:247.7px;font-size:11px;line-height:11px;color:#5f6368;">E</span>
<span class="t" style="left:701.6px;top:247.7px;font-size:11px;line-height:11px;color:#5f6368;">F</span>
<span class="t" style="left:795.2px;top:247.7px;font-size:11px;line-height:11px;color:#5f6368;">G</span>
<span class="t" style="left:890.0px;top:247.7px;font-size:11px;line-height:11px;color:#5f6368;">H</span>
<span class="t" style="left:987.5px;top:247.7px;font-size:11px;line-height:11px;color:#5f6368;">I</span>
<span class="t" style="left:1080.8px;top:247.7px;font-size:11px;line-height:11px;color:#5f6368;">J</span>
<span class="t" style="left:1169.8px;top:247.7px;font-size:11px;line-height:11px;color:#5f6368;">K</span>
<span class="t" style="left:20.6px;top:269.2px;font-size:11px;line-height:11px;color:#5f6368;transform:scaleX(0.9500);">1</span>
<span class="t" style="left:20.6px;top:288.7px;font-size:11px;line-height:11px;color:#5f6368;transform:scaleX(0.9500);">2</span>
<span class="t" style="left:20.6px;top:308.2px;font-size:11px;line-height:11px;color:#5f6368;transform:scaleX(0.9500);">3</span>
<span class="t" style="left:20.6px;top:335.2px;font-size:11px;line-height:11px;color:#5f6368;transform:scaleX(0.9500);">4</span>
<span class="t" style="left:20.6px;top:370.2px;font-size:11px;line-height:11px;color:#5f6368;transform:scaleX(0.9500);">5</span>
<span class="t" style="left:20.6px;top:404.7px;font-size:11px;line-height:11px;color:#5f6368;transform:scaleX(0.9500);">6</span>
<span class="t" style="left:20.6px;top:439.2px;font-size:11px;line-height:11px;color:#5f6368;transform:scaleX(0.9500);">7</span>
<span class="t" style="left:20.6px;top:474.2px;font-size:11px;line-height:11px;color:#5f6368;transform:scaleX(0.9500);">8</span>
<span class="t" style="left:20.6px;top:508.7px;font-size:11px;line-height:11px;color:#5f6368;transform:scaleX(0.9500);">9</span>
<span class="t" style="left:17.7px;top:543.2px;font-size:11px;line-height:11px;color:#5f6368;transform:scaleX(0.9500);">10</span>
<span class="t" style="left:18.1px;top:570.2px;font-size:11px;line-height:11px;color:#5f6368;transform:scaleX(0.9500);">11</span>
<span class="t" style="left:17.7px;top:589.7px;font-size:11px;line-height:11px;color:#5f6368;transform:scaleX(0.9500);">12</span>
<span class="t" style="left:17.7px;top:609.7px;font-size:11px;line-height:11px;color:#5f6368;transform:scaleX(0.9500);">13</span>
<div class="a" style="left:46px;top:266px;width:140px;height:18px;background:#ffff00;"></div>
<span class="t" style="left:47.7px;top:268.6px;font-size:12px;line-height:12px;color:#000;font-weight:700;transform:scaleX(1.0181);">T-Shirt distribution - Starfire Building - 5030 Oaklawn Drive, Cincinnati, OH 45227 - go to the back</span>
<span class="t" style="left:47.7px;top:288.6px;font-size:12px;line-height:12px;color:#000;font-weight:700;">Contact: Beth Dulle, 513.257.5094</span>
<span class="t" style="left:47.7px;top:342.6px;font-size:12px;line-height:12px;color:#000;font-weight:700;transform:scaleX(1.0190);">TIME</span>
<span class="t" style="left:189.2px;top:327.6px;font-size:12px;line-height:12px;color:#000;font-weight:700;transform:scaleX(1.0171);">VOLUNTEER NAME &amp;</span>
<span class="t" style="left:189.2px;top:342.6px;font-size:12px;line-height:12px;color:#000;font-weight:700;transform:scaleX(1.0064);">PHONE NUMBER</span>
<span class="t" style="left:345.6px;top:327.6px;font-size:12px;line-height:12px;color:#000;font-weight:700;transform:scaleX(1.0065);">VOLUNTEER NAME</span>
<span class="t" style="left:345.6px;top:342.6px;font-size:12px;line-height:12px;color:#000;font-weight:700;transform:scaleX(1.0066);">&amp; PHONE NUMBER</span>
<span class="t" style="left:47.7px;top:377.6px;font-size:12px;line-height:12px;color:#000;">2:45-4:45pm</span>
<span class="t" style="left:47.7px;top:362.6px;font-size:12px;line-height:12px;color:#000;">Wednesday, 10/28/20 -</span>
<span class="t" style="left:189.2px;top:377.6px;font-size:12px;line-height:12px;color:#000;">Jacqui grega 5134440628</span>
<span class="t" style="left:345.6px;top:377.6px;font-size:12px;line-height:12px;color:#000;transform:scaleX(1.0190);">Maddy Goodman</span>
<span class="t" style="left:471.0px;top:377.6px;font-size:12px;line-height:12px;color:#000;transform:scaleX(1.0190);">Beth</span>
<span class="t" style="left:47.7px;top:411.6px;font-size:12px;line-height:12px;color:#000;">4:45-6:45pm</span>
<span class="t" style="left:47.7px;top:396.6px;font-size:12px;line-height:12px;color:#000;">Wednesday, 10/28/20 -</span>
<span class="t" style="left:345.6px;top:411.6px;font-size:12px;line-height:12px;color:#000;transform:scaleX(1.0190);">Maddy Goodman</span>
<span class="t" style="left:471.0px;top:411.6px;font-size:12px;line-height:12px;color:#000;transform:scaleX(1.0190);">Beth</span>
<span class="t" style="left:47.7px;top:446.6px;font-size:12px;line-height:12px;color:#000;">2:45-4:45pm</span>
<span class="t" style="left:47.7px;top:431.6px;font-size:12px;line-height:12px;color:#000;">Friday, 10/30/20 -</span>
<span class="t" style="left:345.6px;top:446.6px;font-size:12px;line-height:12px;color:#000;transform:scaleX(1.0190);">Maddy Goodman</span>
<span class="t" style="left:471.0px;top:446.6px;font-size:12px;line-height:12px;color:#000;transform:scaleX(1.0190);">Beth</span>
<span class="t" style="left:47.7px;top:481.6px;font-size:12px;line-height:12px;color:#000;">4:45-6:45pm</span>
<span class="t" style="left:47.7px;top:466.6px;font-size:12px;line-height:12px;color:#000;">Friday, 10/30/20 -</span>
<span class="t" style="left:345.6px;top:481.6px;font-size:12px;line-height:12px;color:#000;">5137132273</span>
<span class="t" style="left:345.6px;top:466.6px;font-size:12px;line-height:12px;color:#000;transform:scaleX(1.0190);">Maya Wolfford</span>
<span class="t" style="left:471.0px;top:481.6px;font-size:12px;line-height:12px;color:#000;transform:scaleX(1.0190);">Beth</span>
<span class="t" style="left:47.7px;top:515.6px;font-size:12px;line-height:12px;color:#000;">8:45-10:45am</span>
<span class="t" style="left:47.7px;top:500.6px;font-size:12px;line-height:12px;color:#000;">Saturday, 10/31 -</span>
<span class="t" style="left:189.2px;top:515.6px;font-size:12px;line-height:12px;color:#000;transform:scaleX(1.0190);">Maddy Goodman</span>
<span class="t" style="left:345.6px;top:515.6px;font-size:12px;line-height:12px;color:#000;">513-504-2066</span>
<span class="t" style="left:345.6px;top:500.6px;font-size:12px;line-height:12px;color:#000;transform:scaleX(1.0190);">Anjali Raman</span>
<span class="t" style="left:471.0px;top:515.6px;font-size:12px;line-height:12px;color:#000;transform:scaleX(1.0190);">Nancy</span>
<span class="t" style="left:47.7px;top:550.6px;font-size:12px;line-height:12px;color:#000;">10:45am -12:45pm</span>
<span class="t" style="left:47.7px;top:535.6px;font-size:12px;line-height:12px;color:#000;">Saturday, 10/31 -</span>
<span class="t" style="left:189.2px;top:550.6px;font-size:12px;line-height:12px;color:#000;">Anna Keller 513-484-2055</span>
<span class="t" style="left:345.6px;top:550.6px;font-size:12px;line-height:12px;color:#000;">513-344-9424</span>
<span class="t" style="left:345.6px;top:535.6px;font-size:12px;line-height:12px;color:#000;transform:scaleX(1.0190);">Abigail Adams</span>
<span class="t" style="left:471.0px;top:550.6px;font-size:12px;line-height:12px;color:#000;transform:scaleX(1.0190);">Beth</span>
<div class="a" style="left:45px;top:265px;width:142px;height:20px;background:transparent;border:2px solid #1a73e8"></div>
<div class="a" style="left:182.5px;top:280.5px;width:7px;height:7px;background:#1a73e8;border:1px solid #fff"></div>
<div class="a" style="left:1216px;top:243px;width:12px;height:394px;background:#fff;"></div>
<div class="a" style="left:1216px;top:243px;width:1px;height:394px;background:#e1e1e1;"></div>
<div class="a" style="left:1228px;top:243px;width:1px;height:432px;background:#e1e3e6;"></div>
<div class="a" style="left:1216px;top:597px;width:12px;height:1px;background:#e1e1e1;"></div>
<div class="a" style="left:1216px;top:611px;width:12px;height:1px;background:#e1e1e1;"></div>
<div class="a" style="left:1216px;top:625px;width:12px;height:1px;background:#e1e1e1;"></div>
<svg class="a" style="left:1219px;top:602px;" width="6" height="4" viewBox="0 0 6 4"><path d="M0 4H6L3 0Z" fill="#7a7d81"/></svg>
<svg class="a" style="left:1219px;top:616px;" width="6" height="4" viewBox="0 0 6 4"><path d="M0 0H6L3 4Z" fill="#7a7d81"/></svg>
<div class="a" style="left:45px;top:626px;width:1171px;height:11px;background:#fff;"></div>
<div class="a" style="left:2px;top:625px;width:1226px;height:1px;background:#d9d9d9;"></div>
<div class="a" style="left:46px;top:628px;width:600px;height:8px;background:#dadce0;border-radius:4px"></div>
<div class="a" style="left:1185px;top:626px;width:1px;height:11px;background:#e1e1e1;"></div>
<div class="a" style="left:1201px;top:626px;width:1px;height:11px;background:#e1e1e1;"></div>
<svg class="a" style="left:1191px;top:629px;" width="4" height="6" viewBox="0 0 4 6"><path d="M4 0V6L0 3Z" fill="#7a7d81"/></svg>
<svg class="a" style="left:1207px;top:629px;" width="4" height="6" viewBox="0 0 4 6"><path d="M0 0V6L4 3Z" fill="#7a7d81"/></svg>
<div class="a" style="left:2px;top:637px;width:1226px;height:38px;background:#f1f3f4;"></div>
<div class="a" style="left:2px;top:637px;width:1226px;height:1px;background:#e4e6e8;"></div>
<div class="a" style="left:110.5px;top:637px;width:89.5px;height:38px;background:#fff;box-shadow:0 1px 3px rgba(60,64,67,.3)"></div>
<svg class="a" style="left:49px;top:650px;" width="12" height="12" viewBox="0 0 12 12"><path d="M6 0V12M0 6H12" stroke="#5f6368" stroke-width="1.7"/></svg>
<svg class="a" style="left:78px;top:651px;" width="13" height="10" viewBox="0 0 13 10"><path d="M0 1H13M0 5H13M0 9H13" stroke="#5f6368" stroke-width="1.7"/></svg>
<span class="t" style="left:126.5px;top:649.9px;font-size:14px;line-height:14px;color:#188038;transform:scaleX(0.9127);-webkit-text-stroke:0.5px #188038;">Sheet1</span>
<svg class="a" style="left:177px;top:655px;" width="8" height="4" viewBox="0 0 8 4"><path d="M0 0H8L4 4Z" fill="#188038"/></svg>
<svg class="a" style="left:1192px;top:648px;" width="18" height="20" viewBox="0 0 18 20"><path d="M2 0H16A2 2 0 0 1 18 2V14.4A2 2 0 0 1 16 16.4H11.4L9 19.4L6.6 16.4H2A2 2 0 0 1 0 14.4V2A2 2 0 0 1 2 0Z" fill="#5f6368"/><path d="M9 2.8L10.6 6.6L14.4 8.2L10.6 9.8L9 13.6L7.4 9.8L3.6 8.2L7.4 6.6Z" fill="#fff"/></svg>
<!-- overlay_ui -->
<div class="a" style="left:590px;top:144.5px;width:102px;height:37.5px;background:#e6f4ea;border-radius:4px;box-shadow:0 1px 3px rgba(60,64,67,.35),0 2px 5px rgba(60,64,67,.15)"></div>
<span class="t" style="left:613.0px;top:156.1px;font-size:14px;line-height:14px;color:#3c4043;transform:scaleX(0.8572);">Working…</span>
<div class="a" style="left:965px;top:176px;width:303px;height:198.5px;background:rgba(255,255,255,0.968);border-radius:9px;box-shadow:0 3px 7px rgba(60,64,67,.2),0 7px 16px 2px rgba(60,64,67,.13)"></div>
<span class="t" style="left:988.0px;top:201.1px;font-size:20px;line-height:20px;color:#202124;transform:scaleX(1.0264);">You're currently signed in as</span>
<span class="t" style="left:988.0px;top:227.4px;font-size:20px;line-height:20px;color:#202124;transform:scaleX(1.0502);-webkit-text-stroke:0.55px #202124;">anjaliraman1@icloud.com</span>
<div class="a" style="left:987.7px;top:266px;width:30px;height:30px;background:#33691e;border-radius:50%"></div>
<span class="t" style="left:997.7px;top:274.6px;font-size:15px;line-height:15px;color:#fff;transform:scaleX(1.0284);-webkit-text-stroke:0.3px #fff;">A</span>
<span class="t" style="left:1025.3px;top:274.0px;font-size:13.2px;line-height:13.2px;color:#5f6368;transform:scaleX(0.9829);-webkit-text-stroke:0.3px #5f6368;">Anjali Raman</span>
<div class="a" style="left:1017px;top:319px;width:149.5px;height:33px;background:#fff;border:1px solid #dadce0;border-radius:4px"></div>
<span class="t" style="left:1040.0px;top:329.1px;font-size:13.8px;line-height:13.8px;color:#188038;transform:scaleX(1.0179);-webkit-text-stroke:0.4px #188038;">Change account</span>
<div class="a" style="left:1178px;top:319px;width:67px;height:33px;background:#188038;border-radius:4px"></div>
<span class="t" style="left:1201.8px;top:329.1px;font-size:13.8px;line-height:13.8px;color:#fff;transform:scaleX(0.9781);-webkit-text-stroke:0.4px #fff;">OK</span>
<div class="a" style="left:2px;top:656px;width:423px;height:19px;background:#5bb8c1;border-radius:0 4px 0 0"></div>
<span class="t" style="left:7.0px;top:659.4px;font-size:12px;line-height:12px;color:#17282b;transform:scaleX(0.9605);">Waiting for docs.google.com</span>
<span class="t" style="left:152.8px;top:659.4px;font-size:12px;line-height:12px;color:#17282b;transform:scaleX(0.5583);">…</span>
<!-- shelf_ui -->
<div class="a" style="left:0px;top:675px;width:20px;height:45px;background:#6d6358;"></div>
<div class="a" style="left:1260px;top:675px;width:20px;height:45px;background:#8f8068;"></div>
<div class="a" style="left:0px;top:675px;width:1280px;height:45px;background:#26282e;border-radius:18px 18px 0 0"></div>
<div class="a" style="left:5px;top:680px;width:34px;height:34px;background:#37393f;border-radius:50%"></div>
<div class="a" style="left:15.5px;top:690.5px;width:13px;height:13px;background:transparent;border:2px solid #fff;border-radius:50%"></div>
<svg class="a" style="left:599px;top:681.5px;" width="31.6" height="31.6" viewBox="0 0 32 32"><circle cx="16" cy="16" r="15.8" fill="#fff"/>
<path d="M16 16L2.32 8.1A15.8 15.8 0 0 1 29.68 8.1Z" fill="#db4437"/>
<path d="M16 16L29.68 8.1A15.8 15.8 0 0 1 16 31.8Z" fill="#ffcd40"/>
<path d="M16 16L16 31.8A15.8 15.8 0 0 1 2.32 8.1Z" fill="#0f9d58"/>
<path d="M16 8.9H29.3A15.8 15.8 0 0 1 16 31.8L22.15 19.55Z" fill="#ffcd40"/>
<path d="M9.85 19.55L2.32 8.1A15.8 15.8 0 0 0 16 31.8L22.15 19.55Z" fill="#0f9d58"/>
<path d="M2.32 8.1A15.8 15.8 0 0 1 29.3 8.9H16L9.85 19.55Z" fill="#db4437"/>
<circle cx="16" cy="16" r="7.1" fill="#fff"/><circle cx="16" cy="16" r="5.7" fill="#4285f4"/></svg>
<div class="a" style="left:609.8px;top:716px;width:9.8px;height:2px;background:#fff;border-radius:1px"></div>
<svg class="a" style="left:656px;top:682.5px;" width="22.6" height="30" viewBox="0 0 22.6 30"><path d="M2 0H15.4L22.6 7.2V28A2 2 0 0 1 20.6 30H2A2 2 0 0 1 0 28V2A2 2 0 0 1 2 0Z" fill="#4285f4"/><path d="M15.4 0L22.6 7.2H17.4A2 2 0 0 1 15.4 5.2Z" fill="#a6c5fa"/><path d="M16 7.2H22.6V12Z" fill="#3367d6" opacity="0.5"/><path d="M5.2 14.1H17.2M5.2 16.7H17.2M5.2 19.2H17.2M5.2 21.7H12.4" stroke="#e3edfd" stroke-width="1.4"/></svg>
<div class="a" style="left:1068px;top:682px;width:78px;height:34px;background:#f28b82;border-radius:4px"></div>
<span class="t" style="left:1083.6px;top:692.8px;font-size:13px;line-height:13px;color:#2a1a1a;transform:scaleX(0.9790);-webkit-text-stroke:0.25px #2a1a1a;">Sign out</span>
<div class="a" style="left:1156px;top:681px;width:118.6px;height:36.5px;background:#3f4147;border-radius:18.25px"></div>
<span class="t" style="left:1166.8px;top:693.4px;font-size:12.5px;line-height:12.5px;color:#fff;transform:scaleX(0.9324);-webkit-text-stroke:0.3px #fff;">US</span>
<svg class="a" style="left:1190.5px;top:694px;" width="15" height="11.6" viewBox="0 0 15 11.6"><path d="M7.5 11.6L0 2.6A11.4 11.4 0 0 1 15 2.6Z" fill="#fff"/></svg>
<svg class="a" style="left:1213.5px;top:693px;" width="9" height="14" viewBox="0 0 9 14"><path d="M2.8 0H6.2V1.6H8A1 1 0 0 1 9 2.6V13A1 1 0 0 1 8 14H1A1 1 0 0 1 0 13V2.6A1 1 0 0 1 1 1.6H2.8Z" fill="#fff"/></svg>
<span class="t" style="left:1230.2px;top:693.4px;font-size:12.5px;line-height:12.5px;color:#fff;transform:scaleX(1.0166);-webkit-text-stroke:0.3px #fff;">12:51</span>
</body>
</html>
